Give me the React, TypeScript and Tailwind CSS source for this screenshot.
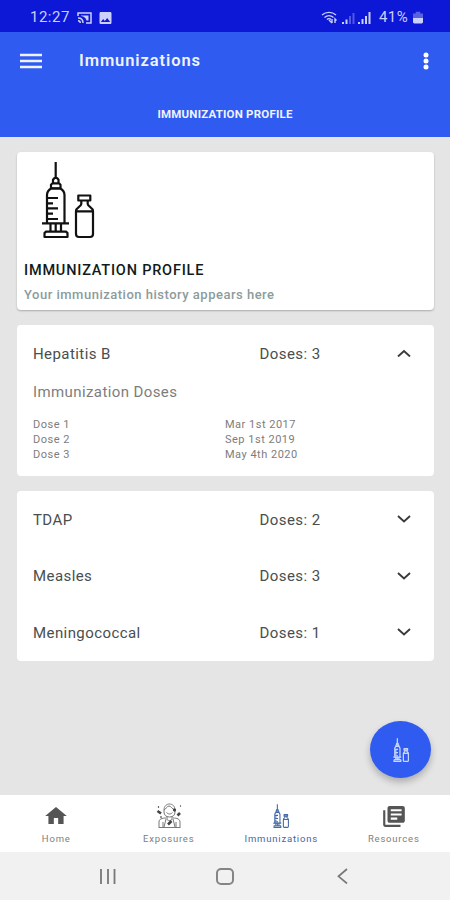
import { useState } from "react";
import { MdHome, MdImage, MdLibraryBooks } from "react-icons/md";

interface Dose {
  readonly label: string;
  readonly date: string;
}

interface Immunization {
  readonly name: string;
  readonly count: number;
  readonly doses: Dose[];
}

const hepatitis: Immunization = {
  name: "Hepatitis B",
  count: 3,
  doses: [
    { label: "Dose 1", date: "Mar 1st 2017" },
    { label: "Dose 2", date: "Sep 1st 2019" },
    { label: "Dose 3", date: "May 4th 2020" },
  ],
};

const others: Immunization[] = [
  { name: "TDAP", count: 2, doses: [] },
  { name: "Measles", count: 3, doses: [] },
  { name: "Meningococcal", count: 1, doses: [] },
];

function SyringeIcon({ className, stroke = 2.2 }: { className?: string; stroke?: number }) {
  return (
    <svg
      viewBox="0 0 54 78"
      preserveAspectRatio="none"
      className={className}
      fill="none"
      stroke="currentColor"
      strokeWidth={stroke}
      strokeLinejoin="round"
    >
      <path d="M14.7 1v16M12 22.300v-3.500l1.500-1.800h2.500l1.500 1.800v3.500M10 27.300v-3.500l1.500-1.500h6.500l1.500 1.500v3.500z" />
      <path d="M6 62.300V34c0-3 1.500-5 4-6.500h9.500c2.500 1.500 4 3.500 4 6.500v28.300" />
      <path d="M7 37h10M7 42.300h5M7 47.300h10M7 52.700h5M7 58h10" />
      <path d="M1 62.300h27M9.500 62.300v8M14.700 62.300v8M20 62.300v8" />
      <path d="M5 70.600h20l1.500 1.500V76h-23v-3.900z" />
      {/* vial */}
      <path d="M37.300 34.500h12v5h-12zM40.300 39.500v3.500c0 2.500-5.300 3.500-5.300 7V73c0 2 1 3 3 3h11c2 0 3-1 3-3V50c0-3.500-5.300-4.500-5.300-7v-3.500M35 50.300h17" />
    </svg>
  );
}

function ExposureIcon() {
  return (
    <svg viewBox="0 0 26 26" className="h-[26px] w-[26px]" fill="none" stroke="#777" strokeWidth="1">
      <path d="M8 7c0-8 11-8 11 0v2c0 3-2 5-5.500 5S8 12 8 9z" />
      <path d="M8 7c2-1 3-4 5-4s3 3 6 4M10.500 9.500c2 2 4 2 6 0M11 13v3c0 2 5 2 5 0v-3" />
      <path d="M3 25v-6c0-3 3-4 7-4M24 25v-6c0-3-3-4-7-4M3 24.500h21M7 19v5M20 19v5M10 16l-2 8M17 16l2 8" />
      <g fill="#444" stroke="#444">
        <path d="M1.500 8l3.500 2.500M21.500 12.500l2.500-2.500M12 21.500l3.500-3.500" strokeWidth="2.600" />
        <circle cx="18.500" cy="7" r="1.200" />
        <circle cx="2.500" cy="4" r="0.400" />
        <circle cx="24.500" cy="3" r="0.300" />
        <circle cx="5" cy="14" r="0.400" />
      </g>
    </svg>
  );
}

function Chevron({ up }: { up: boolean }) {
  return (
    <svg viewBox="0 0 14 8" className="mb-px h-2 w-3.5" fill="none" stroke="#3b3b3b" strokeWidth="1.900">
      <path d={up ? "M1 7.500l6-5.500 6 5.500" : "M1 1l6 5.500L13 1"} />
    </svg>
  );
}

function StatusBar() {
  return (
    <div className="flex h-8 shrink-0 items-center bg-[#0d17d6] pl-[30px] pr-[27px] pt-[3px] text-[#cbd0fb]">
      <span className="w-[47px] text-[15px] tracking-[0.5px]">12:27</span>
      <svg viewBox="0 0 15 12" className="h-3 w-[15px]" fill="none" stroke="currentColor" strokeWidth="1.500">
        <path d="M1 4V1h13v10H9" />
        <path d="M4 3.500h7.500V8.500h-2C9 6 7 4.500 4 4z" fill="currentColor" stroke="none" />
        <path d="M1 6c3 0 5 2 5 5M1 8.700c1.500 0 2.300 1 2.300 2.300" />
      </svg>
      <MdImage className="ml-[5px] h-4 w-[17px]" />
      <svg viewBox="0 0 16 13" className="ml-auto h-[13px] w-4" fill="none" stroke="currentColor" strokeWidth="1.400">
        <path d="M1 4c4-3.500 10-3.500 14 0M3.500 6.500c3-2.500 6-2.500 9 0M6 8.500c1-1 3-1 4 0" />
        <path d="M8 9l1.500 1.500M11 8v4M9.500 10.500l1.500 1.500M14 12V8l1.500 1.500" />
      </svg>
      <svg viewBox="0 0 13 12" className="ml-[5px] h-3 w-[13px]" fill="currentColor">
        <path d="M0 10h2v2H0zM3.500 7.500h2V12h-2z" />
        <path d="M7 4h2v8H7zM10.500 1h2v11h-2z" opacity="0.350" />
      </svg>
      <svg viewBox="0 0 13 12" className="ml-[3px] h-3 w-[13px]" fill="currentColor">
        <path d="M0 10h2v2H0zM3.500 7h2v5h-2zM7 4h2v8H7zM10.500 0h2v12h-2z" />
      </svg>
      <span className="ml-2 w-[31px] whitespace-nowrap text-[15px] tracking-[0.4px]">41%</span>
      <svg viewBox="0 0 11 14" className="ml-[3px] h-3.5 w-[10px]" fill="currentColor">
        <path d="M3 0h5v2h3v5H0V2h3z" opacity="0.400" />
        <path d="M0 7h11v4.500a1.500 1.500 0 0 1-1.500 1.500h-8A1.500 1.500 0 0 1 0 11.500z" />
      </svg>
    </div>
  );
}

function ImmunizationRow({ item, defaultOpen = false }: { item: Immunization; defaultOpen?: boolean }) {
  const [isOpen, setIsOpen] = useState(defaultOpen);

  return (
    <div>
      <button
        onClick={() => setIsOpen(!isOpen)}
        aria-expanded={isOpen}
        className="flex h-[56.5px] w-full items-center pl-4 pr-[23px] pt-px text-left text-[15px] tracking-[0.42px] text-[#494e4e]"
      >
        <span className="w-[226.5px]">{item.name}</span>
        <span className="flex-1">Doses: {item.count}</span>
        <Chevron up={isOpen} />
      </button>
      {isOpen && item.doses.length > 0 && (
        <div className="px-4 pb-[14px] text-[#7d7d7d]">
          <div className="text-[15px] leading-[21px] tracking-[0.4px]">Immunization Doses</div>
          <div className="mt-[14px] text-[11px] leading-[15px] tracking-[0.5px]">
            {item.doses.map((dose) => (
              <div key={dose.label} className="flex">
                <span className="w-[192px]">{dose.label}</span>
                <span>{dose.date}</span>
              </div>
            ))}
          </div>
        </div>
      )}
    </div>
  );
}

function NavItem({ label, active, children }: { label: string; active?: boolean; children: React.ReactNode }) {
  return (
    <button className={`flex flex-1 flex-col items-center pt-2 ${active ? "text-[#4468a5]" : "text-[#555]"}`}>
      <span className="flex h-[26px] items-center">{children}</span>
      <span className={`mt-[3px] text-[9.5px] leading-[13px] tracking-[0.8px] ${active ? "" : "text-[#808080]"}`}>
        {label}
      </span>
    </button>
  );
}

export default function App() {
  return (
    <div className="relative flex h-[900px] w-[450px] flex-col overflow-hidden bg-[#e5e5e5] font-[Roboto,sans-serif]">
      <StatusBar />

      <header className="h-[105px] shrink-0 bg-[#305bf0] text-[#eef3ff]">
        <div className="flex h-[58px] items-center pl-5 pr-[21px]">
          <svg viewBox="0 0 22 16" className="h-4 w-[22px]" stroke="currentColor" strokeWidth="2.500">
            <path d="M0 2h22M0 8h22M0 14h22" />
          </svg>
          <h1 className="ml-[37px] flex-1 pt-px text-[16.5px] font-semibold tracking-[0.9px]">Immunizations</h1>
          <svg viewBox="0 0 6 18" className="h-[18px] w-1.5" fill="#fff">
            <circle cx="3" cy="3" r="2.500" />
            <circle cx="3" cy="9" r="2.500" />
            <circle cx="3" cy="15" r="2.500" />
          </svg>
        </div>
        <div className="flex h-[47px] items-center justify-center pt-0.5 text-[11.5px] font-bold tracking-[0.2px]">
          IMMUNIZATION PROFILE
        </div>
      </header>

      <main className="flex flex-1 flex-col gap-[15px] pl-[17px] pr-4 pt-[15px]">
        <section className="h-[158px] rounded-sm bg-white pl-[7px] pt-[9px] shadow-[0_1px_2px_rgba(0,0,0,0.25)]">
          <SyringeIcon className="ml-[17px] h-[78px] w-[54px] text-[#111]" />
          <h2 className="mt-[21.5px] text-[14.5px] font-medium leading-5 tracking-[0.8px] text-[#111b1b]">
            IMMUNIZATION PROFILE
          </h2>
          <p className="mt-1 text-[13px] font-medium leading-5 tracking-[0.5px] text-[#8c9c9c]">
            Your immunization history appears here
          </p>
        </section>

        <section className="h-[151px] rounded-sm bg-white">
          <ImmunizationRow item={hepatitis} defaultOpen />
        </section>

        <section className="rounded-sm bg-white">
          {others.map((item) => (
            <ImmunizationRow key={item.name} item={item} />
          ))}
        </section>
      </main>

      <button
        aria-label="Add immunization"
        className="absolute left-[370px] top-[721px] flex h-[57px] w-[61px] items-center justify-center rounded-[50%] bg-[#305bf0] text-[#c9d7fb] shadow-[0_4px_7px_rgba(0,0,0,0.25)]"
      >
        <SyringeIcon className="h-6 w-4" stroke={4.2} />
      </button>

      <nav className="flex h-[57px] shrink-0 bg-white">
        <NavItem label="Home">
          <MdHome preserveAspectRatio="none" className="h-6 w-[26px]" />
        </NavItem>
        <NavItem label="Exposures">
          <ExposureIcon />
        </NavItem>
        <NavItem label="Immunizations" active>
          <SyringeIcon className="h-6 w-4" stroke={3.6} />
        </NavItem>
        <NavItem label="Resources">
          <MdLibraryBooks preserveAspectRatio="none" className="h-[25px] w-[26px]" />
        </NavItem>
      </nav>

      <div className="flex h-12 shrink-0 items-center justify-between bg-[#f1f1f1] pl-[99px] pr-[102px]">
        <svg viewBox="0 0 18 16" className="h-4 w-[18px]" stroke="#777" strokeWidth="1.800">
          <path d="M2 1v15M9 1v15M15.500 1v15" />
        </svg>
        <span className="mr-[5px] h-[17px] w-[18px] rounded-[5px] border-2 border-[#858585]" />
        <svg viewBox="0 0 11 16" className="h-4 w-[11px]" fill="none" stroke="#777" strokeWidth="1.700">
          <path d="M10 1L1.500 8.300 10 15.500" />
        </svg>
      </div>
    </div>
  );
}
